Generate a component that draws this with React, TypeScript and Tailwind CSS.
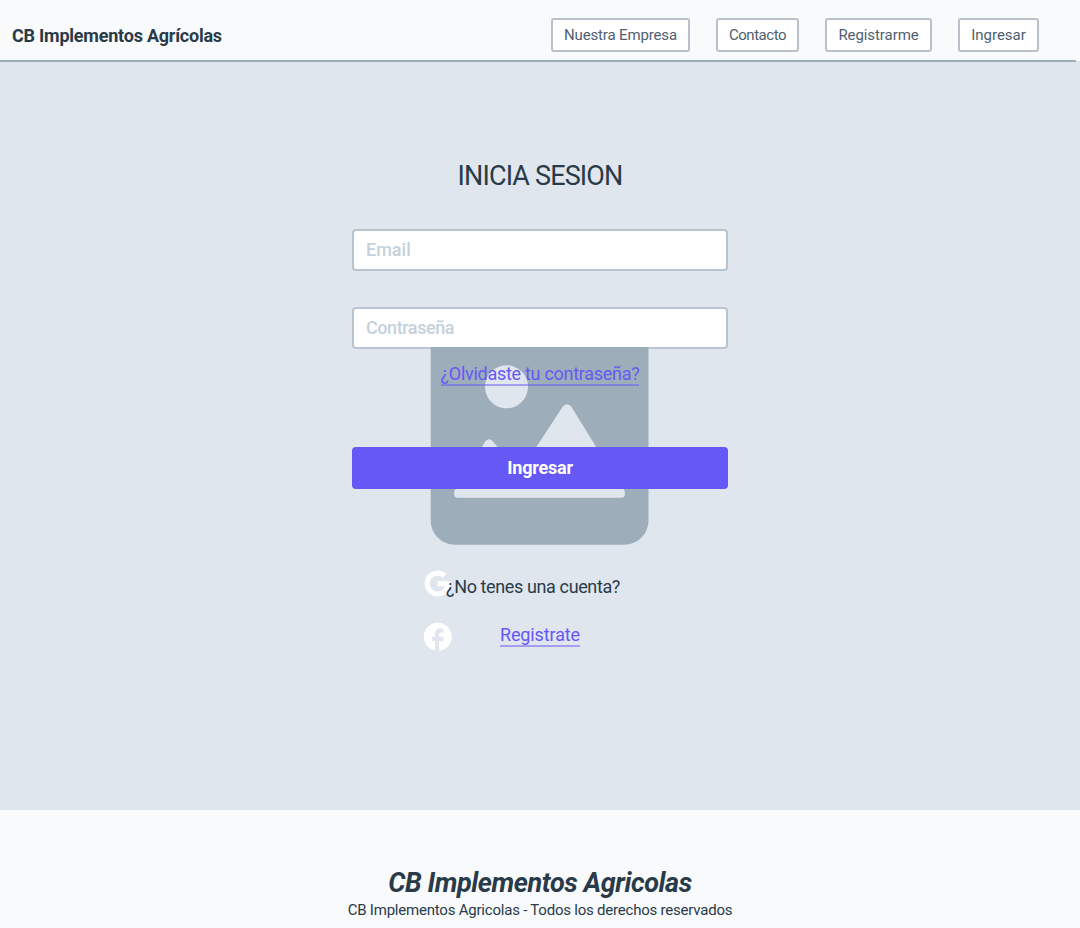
import { MdFacebook } from "react-icons/md";

type LabelProps = { children: string; className?: string };

function NavButton({ children, className = "" }: LabelProps) {
  return (
    <button className={`h-[34px] shrink-0 rounded-[3px] border-2 border-[#b8c1c9] bg-white text-[15px] leading-[30px] whitespace-nowrap text-[#506070] ${className}`}>
      {children}
    </button>
  );
}

function GoogleIcon() {
  return (
    <svg className="absolute -top-[1.600px] left-[70.400px] text-white" width="31.200" height="31.200" viewBox="0 0 48 48" fill="currentColor" aria-hidden="true">
      <path d="M43.611 20.083H42V20H24v8h11.303c-1.649 4.657-6.08 8-11.303 8-6.627 0-12-5.373-12-12s5.373-12 12-12c3.059 0 5.842 1.154 7.961 3.039l5.657-5.657C34.046 6.053 29.268 4 24 4 12.955 4 4 12.955 4 24s8.955 20 20 20 20-8.955 20-20c0-1.341-.138-2.65-.389-3.917z" />
    </svg>
  );
}

function Placeholder() {
  return (
    <svg className="absolute top-[118px] left-[78px]" width="220" height="199" viewBox="430 347 220 199" aria-hidden="true">
      <path fill="#9eadba" d="M430.7 347H648.5V520.5A24 24 0 0 1 624.5 544.7H454.7A24 24 0 0 1 430.7 520.5Z" />
      <circle cx="506.5" cy="386.8" r="21.5" fill="#dfe6ee" />
      <path fill="#dfe6ee" d="M536 447.500L563 406.3Q567 402 571 406.3L596.500 447.500ZM481.500 447.500L485.500 441Q489 437.500 492.500 441L498 447.500ZM456 488H623Q625 491 625 493.500Q625 497.800 621 497.800H458Q454 497.800 454 493.500Q454 491 456 488Z" />
    </svg>
  );
}

const inputClass =
  "block h-[42px] w-full rounded border-2 border-[#b8c4cf] bg-white px-3 pb-[2px] text-[18px] font-medium placeholder:text-[#c5d1dc]";

export default function App() {
  return (
    <div className="flex h-[928px] w-[1080px] flex-col overflow-hidden bg-[#dfe6ee] font-['Roboto',sans-serif] text-[#293b49]">
      <header className="h-[61px] shrink-0 bg-[#f8fafc]">
        <div className="flex h-[62px] w-[1076px] items-start justify-between border-b-2 border-[#9eadba] pt-[18px] pr-[37px] pl-3">
          <div className="text-[18px] leading-[35px] font-bold tracking-[-0.23px] whitespace-nowrap">CB Implementos Agrícolas</div>
          <nav className="flex gap-[26px]">
            <NavButton className="w-[139px] tracking-[-0.15px]">Nuestra Empresa</NavButton>
            <NavButton className="w-[83px] tracking-[-0.45px]">Contacto</NavButton>
            <NavButton className="w-[107px] tracking-[-0.08px]">Registrarme</NavButton>
            <NavButton className="w-[81px]">Ingresar</NavButton>
          </nav>
        </div>
      </header>
      <main className="flex h-[749px] shrink-0 flex-col items-center pt-[95px]">
        <h1 className="text-[27px] leading-10 tracking-[-0.85px] whitespace-nowrap">INICIA SESION</h1>
        <form className="relative mt-[33px] w-[376px]" onSubmit={(e) => e.preventDefault()}>
          <input aria-label="Email" placeholder="Email" className={inputClass} />
          <input aria-label="Contraseña" placeholder="Contraseña" className={`mt-9 tracking-[-0.43px] ${inputClass}`} />
          <Placeholder />
          <div className="relative mt-[14px] flex h-[24px] justify-center">
            <a className="h-[23px] border-b-2 border-[#6558f5]/50 text-[18px] leading-[22px] tracking-[-0.28px] whitespace-nowrap text-[#6558f5]">¿Olvidaste tu contraseña?</a>
          </div>
          <button className="relative mt-[60px] block h-[42px] w-full rounded bg-[#6558f5] pb-[2px] text-[18px] font-bold tracking-[-0.2px] text-white">Ingresar</button>
        </form>
        <section className="relative mt-[81px] flex h-[84px] w-[376px] flex-col items-center">
          <GoogleIcon />
          <MdFacebook className="absolute top-[50.200px] left-[69.200px] text-white" size={33.6} />
          <p className="relative mt-[5px] -ml-[14px] text-[18px] leading-[24px] tracking-[-0.38px] whitespace-nowrap">¿No tenes una cuenta?</p>
          <a className="mt-6 h-[24px] border-b-2 border-[#6558f5]/50 text-[18px] leading-[24px] tracking-[-0.12px] whitespace-nowrap text-[#6558f5]">Registrate</a>
        </section>
      </main>
      <footer className="flex h-[118px] shrink-0 flex-col items-center bg-[#f8fafc] pt-[55px]">
        <div className="text-[27px] leading-[36px] font-bold tracking-[-0.42px] whitespace-nowrap italic">CB Implementos Agricolas</div>
        <p className="-mt-px text-[15px] leading-5 tracking-[-0.215px] whitespace-nowrap">CB Implementos Agricolas - Todos los derechos reservados</p>
      </footer>
    </div>
  );
}
